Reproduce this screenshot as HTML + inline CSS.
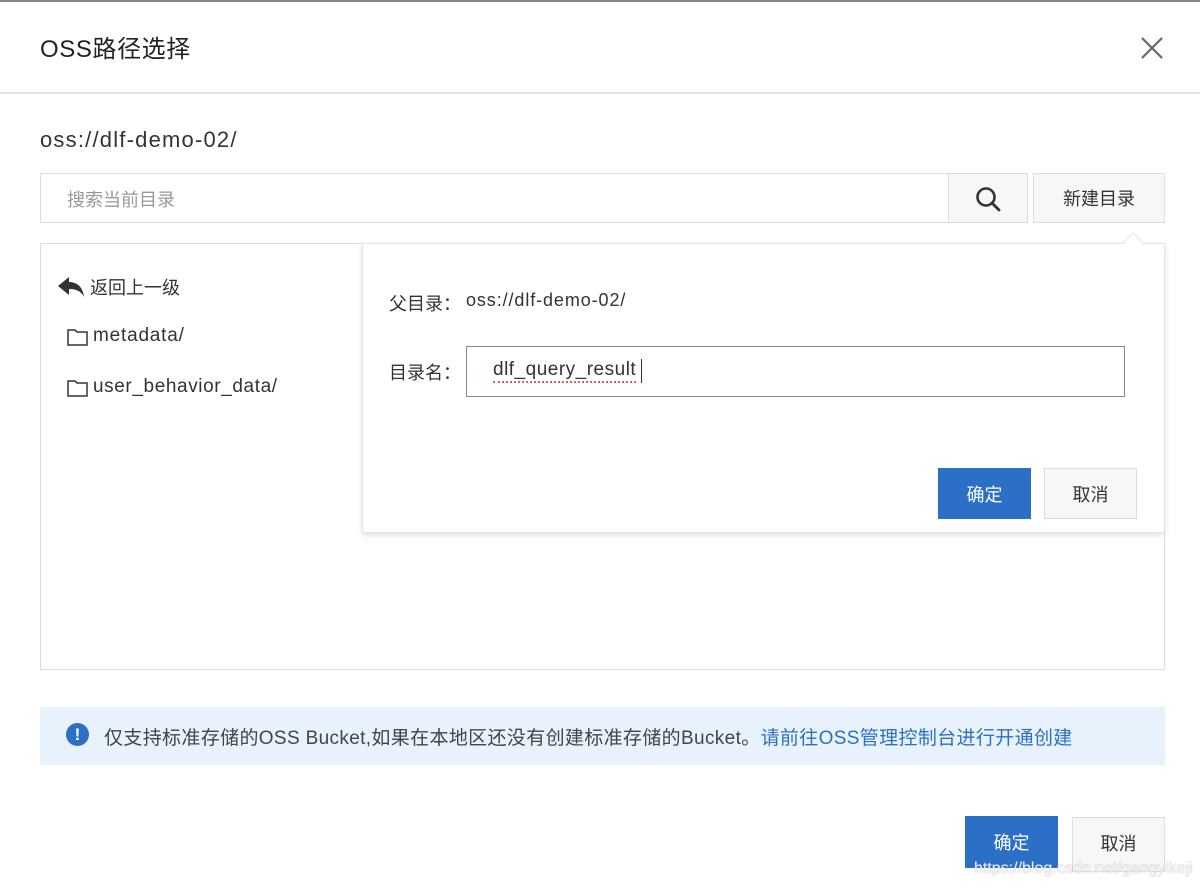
<!DOCTYPE html>
<html><head><meta charset="utf-8"><style>
*{box-sizing:border-box;margin:0;padding:0}
body{width:1200px;height:888px;background:#fff;position:relative;overflow:hidden;font-family:"Liberation Sans","Noto Sans CJK SC",sans-serif;color:#333}
.a{position:absolute}
.btn{position:absolute;display:flex;align-items:center;justify-content:center;font-size:18px}
</style></head><body>
<div class="a" style="left:0;top:0;width:1200px;height:2px;background:#888"></div>
<div class="a" style="left:40px;top:29px;font-size:24px;color:#222;letter-spacing:0.6px">OSS路径选择</div>
<svg class="a" style="left:1140px;top:36px" width="24" height="24"><path d="M2 2L22 22M22 2L2 22" stroke="#666" stroke-width="2.2"/></svg>
<div class="a" style="left:0;top:92px;width:1200px;height:2px;background:#e3e3e3"></div>
<div class="a" style="left:40px;top:127px;font-size:22px;color:#333;letter-spacing:1.2px">oss://dlf-demo-02/</div>
<div class="a" style="left:40px;top:173px;width:909px;height:50px;border:1px solid #ddd"></div>
<div class="a" style="left:67px;top:186px;font-size:18px;color:#999">搜索当前目录</div>
<div class="a" style="left:948px;top:173px;width:80px;height:50px;border:1px solid #ddd;background:#f7f7f7"></div>
<svg class="a" style="left:974px;top:185px" width="28" height="28"><circle cx="12" cy="12" r="8.5" fill="none" stroke="#333" stroke-width="2.6"/><path d="M18 18L25 25" stroke="#333" stroke-width="2.8" stroke-linecap="round"/></svg>
<div class="btn" style="left:1033px;top:173px;width:132px;height:50px;border:1px solid #ddd;background:#f7f7f7;color:#333">新建目录</div>
<div class="a" style="left:40px;top:243px;width:1125px;height:427px;border:1px solid #ddd"></div>
<svg class="a" style="left:57px;top:276px" width="28" height="22"><path d="M1 10L12 1V6C20 6 26 11 27 21C24 15 19 13 12 13V19Z" fill="#333"/></svg>
<div class="a" style="left:90px;top:274px;font-size:18px">返回上一级</div>
<svg class="a" style="left:67px;top:328px" width="22" height="18"><path d="M1 2H8L10 4H20V17H1Z" fill="none" stroke="#333" stroke-width="1.5"/></svg>
<div class="a" style="left:93px;top:325px;font-size:19px;letter-spacing:0.8px">metadata/</div>
<svg class="a" style="left:67px;top:379px" width="22" height="18"><path d="M1 2H8L10 4H20V17H1Z" fill="none" stroke="#333" stroke-width="1.5"/></svg>
<div class="a" style="left:93px;top:376px;font-size:19px;letter-spacing:0.6px">user_behavior_data/</div>
<div class="a" style="left:362px;top:243px;width:803px;height:290px;background:#fff;border:1px solid #e5e5e5;box-shadow:0 2px 6px rgba(0,0,0,.12)"></div>
<div class="a" style="left:1126px;top:235px;width:14px;height:14px;background:#fff;border-left:1px solid #e5e5e5;border-top:1px solid #e5e5e5;transform:rotate(45deg)"></div>
<div class="a" style="left:389px;top:290px;font-size:18px">父目录：</div>
<div class="a" style="left:466px;top:290px;font-size:18px;letter-spacing:0.9px">oss://dlf-demo-02/</div>
<div class="a" style="left:389px;top:359px;font-size:18px">目录名：</div>
<div class="a" style="left:466px;top:346px;width:659px;height:51px;border:1px solid #888"></div>
<div class="a" style="left:493px;top:359px;font-size:19px;color:#333;border-bottom:2px dotted #e06060;line-height:22px;letter-spacing:0.5px">dlf_query_result</div>
<div class="a" style="left:641px;top:359px;width:1px;height:24px;background:#333"></div>
<div class="btn" style="left:938px;top:468px;width:93px;height:51px;background:#2b70c6;color:#fff">确定</div>
<div class="btn" style="left:1044px;top:468px;width:93px;height:51px;background:#f7f7f7;border:1px solid #ddd">取消</div>
<div class="a" style="left:40px;top:707px;width:1125px;height:58px;background:#e8f2fd"></div>
<div class="a" style="left:66px;top:723px;width:23px;height:23px;border-radius:50%;background:#2b70c6;color:#fff;font-size:17px;font-weight:bold;text-align:center;line-height:23px">!</div>
<div class="a" style="left:104px;top:723px;font-size:19px;color:#444;white-space:nowrap;letter-spacing:0.35px">仅支持标准存储的OSS Bucket,如果在本地区还没有创建标准存储的Bucket。<span style="color:#2b70c6">请前往OSS管理控制台进行开通创建</span></div>
<div class="btn" style="left:965px;top:816px;width:93px;height:52px;background:#2b70c6;color:#fff;align-items:flex-start;padding-top:13px">确定</div>
<div class="btn" style="left:1072px;top:817px;width:93px;height:55px;background:#f7f7f7;border:1px solid #ddd;align-items:flex-start;padding-top:12px">取消</div>
<div class="a" style="left:974px;top:860px;font-size:16px;color:rgba(255,255,255,.85);text-shadow:0 0 1px #999">https://blog.csdn.net/gangyikeji</div>
</body></html>
